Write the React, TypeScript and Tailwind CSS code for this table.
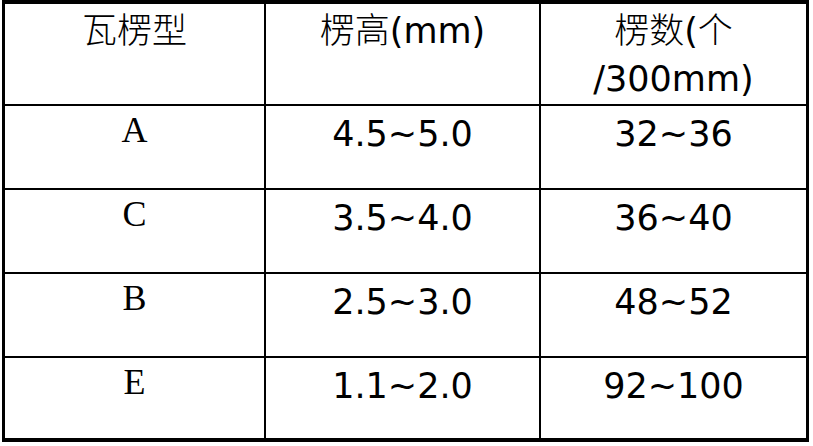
import React from "react";

const sans = "font-['DejaVu_Sans','Noto_Sans_CJK_SC',sans-serif]";
const serif = "font-['Liberation_Serif','Noto_Sans_CJK_SC',serif]";

function Cjk({ children }: { children: React.ReactNode }) {
  return <span className="font-['Noto_Sans_CJK_SC',sans-serif] font-light">{children}</span>;
}

const rows = [
  { t: "A", h: "4.5~5.0", n: "32~36" },
  { t: "C", h: "3.5~4.0", n: "36~40" },
  { t: "B", h: "2.5~3.0", n: "48~52" },
  { t: "E", h: "1.1~2.0", n: "92~100" },
];

export default function App() {
  return (
    <div className="w-[813px] h-[446px] bg-white">
      <div className="ml-[2px] inline-grid grid-cols-[259px_273px_265px] grid-rows-[100px_82px_82px_82px_80px] gap-[2px] bg-black pt-[4px] pb-[4px] pl-[3px] pr-[3px] text-black">
        <div className={`bg-white flex justify-center text-[35px] leading-[48px] ${serif}`}>
          <Cjk>瓦楞型</Cjk>
        </div>
        <div className={`bg-white flex justify-center text-[35px] leading-[48px] ${sans}`}>
          <span>
            <Cjk>楞高</Cjk>(mm)
          </span>
        </div>
        <div className={`bg-white flex justify-center text-center text-[35px] leading-[48px] ${sans}`}>
          <span>
            <Cjk>楞数</Cjk>(<Cjk>个</Cjk>
            <br />
            /300mm)
          </span>
        </div>
        {rows.map((r) => (
          <React.Fragment key={r.t}>
            <div className={`bg-white flex justify-center text-[36px] leading-[48px] ${serif}`}>
              {r.t}
            </div>
            <div className={`bg-white flex justify-center pt-[4px] text-[35px] leading-[48px] ${sans}`}>
              {r.h}
            </div>
            <div className={`bg-white flex justify-center pt-[4px] text-[35px] leading-[48px] ${sans}`}>
              {r.n}
            </div>
          </React.Fragment>
        ))}
      </div>
    </div>
  );
}
